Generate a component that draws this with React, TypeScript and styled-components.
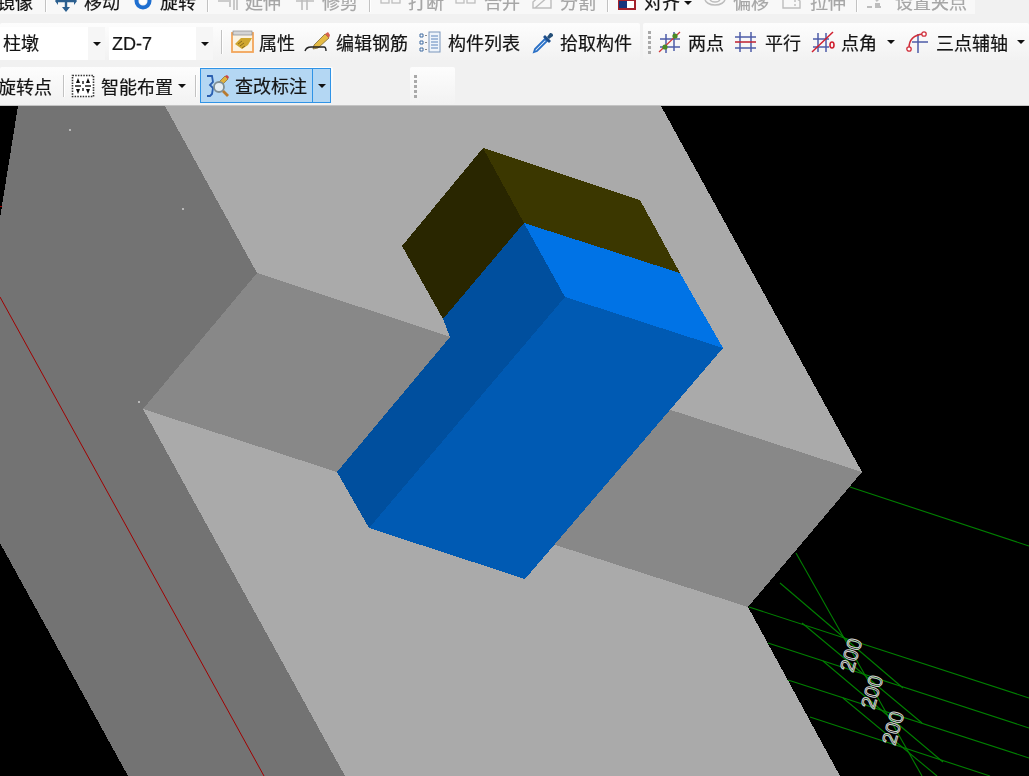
import React from "react";
import styled, { createGlobalStyle } from "styled-components";

const Global = createGlobalStyle`
  html, body { margin: 0; padding: 0; width: 100%; height: 100%; overflow: hidden; background: #000; }
  #root { width: 100%; height: 100%; }
`;

const Page = styled.div`
  width: 1029px;
  height: 776px;
  display: flex;
  flex-direction: column;
  overflow: hidden;
  font-family: "Liberation Sans", "Noto Sans CJK SC", sans-serif;
`;
const ToolArea = styled.div`
  flex: 0 0 106px;
  height: 106px;
  background: #f1f1f1;
  border-bottom: 1px solid #c4c4c4;
  box-sizing: border-box;
  display: flex;
  flex-direction: column;
  overflow: hidden;
  filter: blur(0.5px);
`;
const TopRow = styled.div`
  flex: 0 0 14px;
  height: 14px;
  width: 975px;
  background: #f8f8f8;
  display: flex;
  align-items: flex-end;
  overflow: hidden;
  padding-bottom: 2px;
  box-sizing: border-box;
`;
const Row = styled.div<{ $top: number; $h: number }>`
  margin-top: ${(p) => p.$top}px;
  flex: 0 0 ${(p) => p.$h}px;
  height: ${(p) => p.$h}px;
  display: flex;
`;
const Strip = styled.div<{ $w?: number; $ml?: number }>`
  ${(p) => (p.$w ? `flex: 0 0 ${p.$w}px;` : "flex: 1;")}
  margin-left: ${(p) => p.$ml ?? 0}px;
  background: linear-gradient(#fdfdfd, #f2f2f2);
  border-radius: 2px;
  display: flex;
  align-items: center;
  min-width: 0;
  padding-top: 1px;
  box-sizing: border-box;
`;
const Tool = styled.div<{ $ml?: number }>`
  display: flex;
  align-items: center;
  flex: none;
  margin-left: ${(p) => p.$ml ?? 0}px;
`;
const IconBox = styled.span<{ $w?: number; $gap?: number }>`
  flex: none;
  display: block;
  width: ${(p) => p.$w ?? 22}px;
  height: 22px;
  margin-right: ${(p) => p.$gap ?? 7}px;
  svg { display: block; overflow: visible; }
`;
const Label = styled.span<{ $off?: boolean }>`
  font-size: 18px;
  line-height: 18px;
  padding-top: 3px;
  white-space: nowrap;
  -webkit-text-stroke: 0.2px currentColor;
  color: ${(p) => (p.$off ? "#a6a6a6" : "#141414")};
`;
const Caret = styled.i<{ $ml: number; $lift?: number }>`
  flex: none;
  display: block;
  margin-left: ${(p) => p.$ml}px;
  margin-bottom: ${(p) => p.$lift ?? 0}px;
  width: 0;
  height: 0;
  border-left: 4px solid transparent;
  border-right: 4px solid transparent;
  border-top: 4px solid #111;
`;
const Sep = styled.i<{ $ml: number; $h?: number }>`
  flex: none;
  display: block;
  margin-left: ${(p) => p.$ml}px;
  width: 1px;
  height: ${(p) => p.$h ?? 22}px;
  background: #c2c2c2;
  box-shadow: 1px 0 0 #fff;
`;
const Grip = styled.i<{ $ml: number }>`
  flex: none;
  display: block;
  margin-left: ${(p) => p.$ml}px;
  width: 3px;
  height: 23px;
  background: repeating-linear-gradient(#a9a9a9 0 3px, transparent 3px 5px);
`;
const Combo = styled.div<{ $w: number; $ml?: number }>`
  flex: 0 0 ${(p) => p.$w}px;
  height: 33px;
  margin-left: ${(p) => p.$ml ?? 0}px;
  align-self: flex-end;
  background: #fff;
  display: flex;
  align-items: center;
  padding-left: 3px;
  box-sizing: border-box;
`;
const ComboText = styled.span`
  flex: 1;
  font-size: 18px;
  line-height: 18px;
  -webkit-text-stroke: 0.2px currentColor;
  color: #141414;
`;
const ComboDrop = styled.div`
  flex: 0 0 17px;
  align-self: stretch;
  background: #f6f6f6;
  display: flex;
  align-items: center;
  justify-content: center;
`;
const Active = styled.div`
  flex: none;
  margin-left: 4px;
  align-self: flex-end;
  margin-bottom: 1px;
  width: 131px;
  height: 35px;
  box-sizing: border-box;
  border: 1.5px solid #2f93e6;
  background: #b4d7f3;
  display: flex;
  align-items: center;
`;
const ActiveMain = styled.div`
  flex: 1;
  display: flex;
  align-items: center;
  padding-left: 6px;
  height: 100%;
`;
const ActiveDrop = styled.div`
  flex: 0 0 18px;
  height: 100%;
  border-left: 1.5px solid #2f93e6;
  box-sizing: border-box;
  display: flex;
  align-items: center;
  justify-content: center;
`;
const Canvas = styled.svg`
  flex: 1;
  display: block;
  width: 1029px;
  min-height: 0;
  background: #000;
`;
const Dim = styled.text`
  font-family: "Liberation Sans", sans-serif;
  font-size: 20px;
  fill: none;
  stroke: #d2d2d2;
  stroke-width: 1px;
`;

const G = ({ children }: { children: React.ReactNode }) => (
  <svg width="22" height="22" viewBox="0 0 22 22" fill="none">{children}</svg>
);

const off = "#bdbdbd";
const IMove = () => (
  <G>
    <path d="M11 2v18M2 11h18" stroke="#2b5f8f" strokeWidth="2.4" />
    <path d="M7 17l4 5 4-5zM3 7l-3 4 3 4zM19 7l3 4-3 4z" fill="#2b5f8f" />
  </G>
);
const IRotate = () => (
  <G>
    <circle cx="10" cy="11" r="6.5" stroke="#1f6fd0" strokeWidth="4" />
    <circle cx="10" cy="11" r="3" fill="#fff" />
  </G>
);
const IExtend = () => (
  <G>
    <path d="M1 11h11M13 5v12M17 3v17M20 3v17" stroke={off} strokeWidth="1.6" />
  </G>
);
const ITrim = () => (
  <G>
    <path d="M1 11h18M7 3v17M12 3v17" stroke={off} strokeWidth="1.6" />
  </G>
);
const IBreak = () => (
  <G>
    <rect x="1" y="8" width="8" height="5" stroke={off} strokeWidth="1.3" />
    <rect x="12" y="8" width="8" height="5" stroke={off} strokeWidth="1.3" />
  </G>
);
const ISplit = () => (
  <G>
    <path d="M2 18h18v-8l-9-6-9 8zM4 18L18 6" stroke={off} strokeWidth="1.4" />
  </G>
);
const IAlign = () => (
  <G>
    <rect x="4" y="1" width="11" height="7" fill="#1d4fb4" />
    <rect x="6" y="3" width="7" height="3" fill="#fff" />
    <rect x="2" y="10" width="16" height="9" fill="#fff" stroke="#a3202a" strokeWidth="2" />
    <rect x="2" y="11" width="8" height="7" fill="#16337c" />
  </G>
);
const IOffset = () => (
  <G>
    <ellipse cx="11" cy="9" rx="10" ry="6" stroke={off} strokeWidth="1.5" />
    <ellipse cx="11" cy="9" rx="5" ry="3" stroke={off} strokeWidth="1.5" />
  </G>
);
const IStretch = () => (
  <G>
    <path d="M2 18V6h10l7 5v7z" stroke={off} strokeWidth="1.4" />
    <path d="M14 10v6" stroke={off} strokeWidth="1.4" strokeDasharray="2 2" />
  </G>
);
const IGrips = () => (
  <G>
    <path d="M1 17h5M9 17h6" stroke={off} strokeWidth="2" />
    <path d="M10 11l7-6" stroke={off} strokeWidth="2.4" />
    <rect x="9" y="13" width="5" height="3" fill={off} />
  </G>
);
const IProps = () => (
  <G>
    <rect x="1" y="2" width="21" height="19" fill="#fbf3e2" stroke="#f2a55a" strokeWidth="1.8" />
    <rect x="2" y="0" width="19" height="4" fill="#d4d4d4" stroke="#8a8a8a" strokeWidth="0.7" />
    <path d="M4 13l6-6h11l-4 7-6 4z" fill="#cfa62e" />
    <path d="M7 13l4-3M9 15l4-3M11 17l3-2" stroke="#8a6a1a" strokeWidth="1" />
  </G>
);
const IPencil = () => (
  <G>
    <path d="M9 14L20 3l4 4-11 10-5 1z" fill="#e5bb45" stroke="#6f5a2a" strokeWidth="0.7" />
    <path d="M20 3l4 4 1-3-2-3z" fill="#d8614f" />
    <path d="M0 20c1-3 3-4 6-4M6 16h13c2 0 2 2 2 4" stroke="#222" strokeWidth="1.4" />
  </G>
);
const IList = () => (
  <G>
    <rect x="10" y="1" width="11" height="20" fill="#eef4fb" stroke="#7a96bb" />
    <path d="M12 5h7M12 8h7M12 11h7M12 14h7M12 17h7" stroke="#5c84bb" />
    <path d="M1 3h3v3H1zM1 10h3v3H1zM1 17h3v3H1z" fill="#fff" stroke="#3f6aa0" />
    <path d="M6 4.500h2M6 11.500h2M6 18.500h2" stroke="#8a8a8a" />
  </G>
);
const IDropper = () => (
  <G>
    <path d="M13 8L3 18l-1 3 3-1L15 10z" fill="#eaf3fc" stroke="#2a70c6" strokeWidth="1.8" />
    <path d="M13 4l6 6-2 2-6-6z" fill="#1e4f8c" />
    <path d="M15 6l3-4a2.500 2.500 0 0 1 3 3l-4 3z" fill="#244f78" />
  </G>
);
const blue = "#4d5ca8";
const ITwo = () => (
  <G>
    <path d="M7 3v19M15 1v19M1 8h20M1 16h20" stroke={blue} strokeWidth="1.5" />
    <path d="M0 21L21 1" stroke="#d23a3a" strokeWidth="1.3" />
    <circle cx="16" cy="5" r="2.600" fill="#4b8a24" />
    <circle cx="6" cy="16" r="2.600" fill="#4b8a24" />
  </G>
);
const IParallel = () => (
  <G>
    <path d="M5 1v20M16 1v20M0 6h21M0 17h21" stroke={blue} strokeWidth="1.5" />
    <path d="M0 11h21" stroke="#c02a3a" strokeWidth="1.6" />
  </G>
);
const IAngle = () => (
  <G>
    <path d="M6 2v19M14 2v19M1 8h16M1 16h16" stroke={blue} strokeWidth="1.5" />
    <path d="M0 21L21 1" stroke="#d02030" strokeWidth="1.5" />
    <ellipse cx="20" cy="14" rx="2" ry="3" stroke="#d02030" strokeWidth="1.6" />
  </G>
);
const IThree = () => (
  <G>
    <path d="M12 3v19M6 11h16" stroke={blue} strokeWidth="1.5" />
    <path d="M3 17C3 9 8 4 17 3" stroke="#d0303c" strokeWidth="1.6" />
    <circle cx="3" cy="18" r="2.200" fill="#fff" stroke="#d0303c" strokeWidth="1.300" />
    <circle cx="18" cy="3" r="2.200" fill="#fff" stroke="#d0303c" strokeWidth="1.300" />
  </G>
);
const ISmart = () => (
  <G>
    <rect x="0.500" y="0.500" width="21" height="21" fill="#fff" stroke="#333" strokeWidth="1.600" strokeDasharray="1.500 1.200" />
    <path d="M6 3l2 5H4zM16 3l2 5h-4zM6 19l2-5H4zM16 19l2-5h-4z" fill="#111" />
    <path d="M3 11h6M13 11h6M11 6v3M11 13v3" stroke="#222" strokeWidth="1.500" />
  </G>
);
const IQuery = () => (
  <G>
    <path d="M0 1h5l1 6-3 3 3 3-1 6-2 2H0" stroke="#2a5fb0" strokeWidth="1.800" />
    <path d="M10 9l8-8 3 3-8 8z" fill="#e0b23e" stroke="#7a5a20" strokeWidth="0.600" />
    <path d="M18 1l3 3 1-2-2-2z" fill="#cc4444" />
    <circle cx="12" cy="12" r="5" fill="#e4edf3" stroke="#7f8f96" strokeWidth="1.800" />
    <path d="M16 16l5 5" stroke="#b77a30" strokeWidth="2.800" />
  </G>
);

type Item = { icon?: React.ComponentType; w?: number; gap?: number; label: string; ml: number; off?: boolean };

const Item = ({ icon: I, w, gap, label, ml, off: dim }: Item) => (
  <Tool $ml={ml}>
    {I && (
      <IconBox $w={w} $gap={gap}>
        <I />
      </IconBox>
    )}
    <Label $off={dim}>{label}</Label>
  </Tool>
);

const greens: [number, number, number, number][] = [
  [850, 487, 1029, 546],
  [749, 607, 1029, 698],
  [768, 643, 1029, 728],
  [788, 680, 1029, 758],
  [810, 717, 990, 776],
  [796, 553, 922, 776],
  [780, 583, 903, 688],
  [802, 623, 922, 723],
  [823, 661, 943, 762],
  [843, 698, 937, 776],
];

const dims: [number, number][] = [
  [853, 673],
  [874, 710],
  [895, 746],
];

export default function App() {
  return (
    <Page>
      <Global />
      <ToolArea>
        <TopRow>
          <Item label="镜像" ml={-3} />
          <Sep $ml={12} />
          <Item icon={IMove} label="移动" ml={9} />
          <Item icon={IRotate} w={18} gap={9} label="旋转" ml={13} />
          <Sep $ml={11} />
          <Item icon={IExtend} w={21} label="延伸" ml={9} off />
          <Item icon={ITrim} w={19} gap={8} label="修剪" ml={14} off />
          <Sep $ml={11} />
          <Item icon={IBreak} w={21} label="打断" ml={10} off />
          <Item icon={IBreak} w={21} gap={8} label="合并" ml={11} off />
          <Item icon={ISplit} label="分割" ml={11} off />
          <Sep $ml={11} />
          <Item icon={IAlign} gap={5} label="对齐" ml={9} />
          <Caret $ml={4} $lift={7} />
          <Item icon={IOffset} label="偏移" ml={12} off />
          <Item icon={IStretch} label="拉伸" ml={12} off />
          <Sep $ml={10} />
          <Item icon={IGrips} label="设置夹点" ml={9} off />
        </TopRow>
        <Row $top={9} $h={37}>
          <Strip $w={640}>
            <Combo $w={105}>
              <ComboText>柱墩</ComboText>
              <ComboDrop><Caret $ml={0} /></ComboDrop>
            </Combo>
            <Combo $w={104} $ml={4}>
              <ComboText>ZD-7</ComboText>
              <ComboDrop><Caret $ml={0} /></ComboDrop>
            </Combo>
            <Sep $ml={8} $h={24} />
            <Item icon={IProps} gap={6} label="属性" ml={9} />
            <Item icon={IPencil} w={25} gap={6} label="编辑钢筋" ml={10} />
            <Item icon={IList} label="构件列表" ml={11} />
            <Item icon={IDropper} gap={6} label="拾取构件" ml={12} />
          </Strip>
          <Strip $ml={3}>
            <Grip $ml={5} />
            <Item icon={ITwo} label="两点" ml={8} />
            <Item icon={IParallel} gap={8} label="平行" ml={11} />
            <Item icon={IAngle} gap={7} label="点角" ml={11} />
            <Caret $ml={10} />
            <Item icon={IThree} gap={8} label="三点辅轴" ml={11} />
            <Caret $ml={9} />
          </Strip>
        </Row>
        <Row $top={7} $h={37}>
          <Strip $w={333}>
            <Item label="旋转点" ml={-2} />
            <Sep $ml={11} $h={22} />
            <Item icon={ISmart} label="智能布置" ml={8} />
            <Caret $ml={5} />
            <Sep $ml={9} $h={22} />
            <Active>
              <ActiveMain>
                <IconBox $w={22} $gap={6}><IQuery /></IconBox>
                <Label>查改标注</Label>
              </ActiveMain>
              <ActiveDrop><Caret $ml={0} /></ActiveDrop>
            </Active>
          </Strip>
          <Strip $w={45} $ml={77}>
            <Grip $ml={4} />
          </Strip>
        </Row>
      </ToolArea>
      <Canvas viewBox="0 106 1029 670" shapeRendering="crispEdges">
        <polygon points="18,106 661,106 862,472 748,607 840,776 128,776 0,543 0,218" fill="#737373" />
        <polygon points="165,106 661,106 862,472 748,607 840,776 345,776 143,409 257,273" fill="#aaaaaa" />
        <polygon points="257,273 460,340 340,473 143,409" fill="#888888" />
        <polygon points="640,400 862,472 748,607 540,540" fill="#888888" />
        <polygon points="483,148 640,200 680,273 524,223" fill="#3b3700" />
        <polygon points="483,148 524,223 443,319 402,246" fill="#292600" />
        <polygon points="524,223 680,273 723,348 565,297" fill="#0073e6" />
        <polygon points="524,223 565,297 369,528 337,472 450,337 443,319" fill="#004f9e" />
        <polygon points="565,297 723,348 525,579 369,528" fill="#005ab3" />
        <line x1="0" y1="297" x2="264" y2="776" stroke="#a00000" strokeWidth="1" shapeRendering="auto" />
        <line x1="0" y1="206" x2="2" y2="206" stroke="#a00000" />
        {[[69, 129], [182, 208], [138, 401]].map(([x, y]) => (
          <rect key={x} x={x} y={y} width="2" height="2" fill="#b8b8b8" />
        ))}
        {greens.map(([a, b, c, d]) => (
          <line key={`${a}-${b}`} x1={a} y1={b} x2={c} y2={d} stroke="#007f00" strokeWidth="1.1" shapeRendering="auto" />
        ))}
        {dims.map(([x, y]) => (
          <Dim key={x} x={x} y={y} transform={`rotate(-74 ${x} ${y})`} shapeRendering="auto">
            200
          </Dim>
        ))}
      </Canvas>
    </Page>
  );
}
